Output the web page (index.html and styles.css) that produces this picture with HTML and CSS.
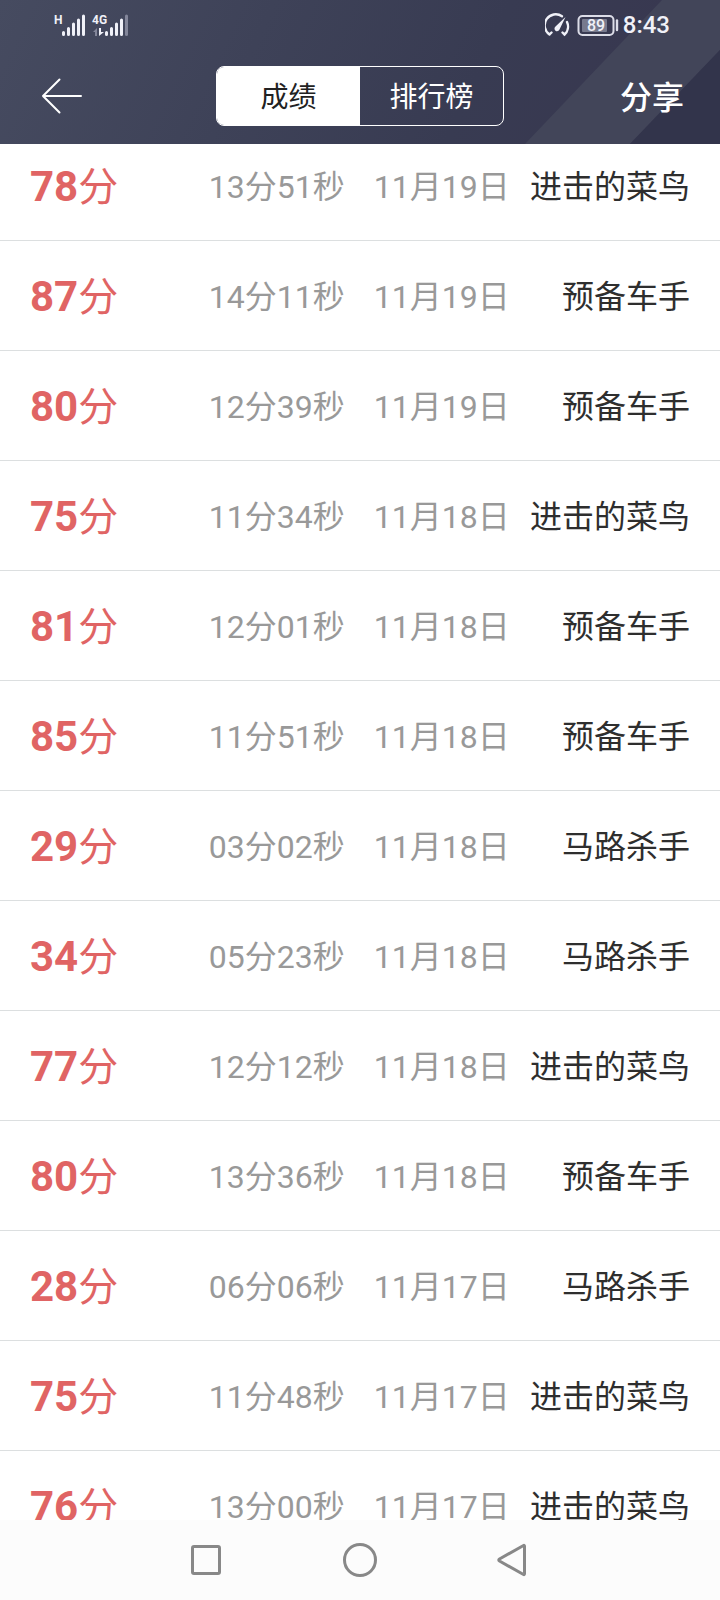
FILE: index.html
```
<!DOCTYPE html>
<html lang="zh-CN">
<head>
<meta charset="utf-8">
<meta name="viewport" content="width=device-width, initial-scale=1">
<title>成绩</title>
<link rel="stylesheet" href="styles.css">
</head>
<body>
<div class="app">
  <header class="header">
    <svg class="header-art" viewBox="0 0 720 144" preserveAspectRatio="xMaxYMid slice" aria-hidden="true">
      <path d="M662 0H720V50L630 144H525Z" fill="#424559"/>
      <path d="M720 50V144H630Z" fill="#32344b"/>
    </svg>
    <div class="status">
      <div class="status-group">
        <svg width="76" height="24" viewBox="53 12 76 24" aria-hidden="true">
          <g class="signal-label"><text x="54" y="23">H</text><text x="92" y="23">4G</text></g>
          <g stroke="#f0f1f8" stroke-width="3" stroke-linecap="round">
            <path d="M63.5 31.5V33.5M68.5 27.5V33.5M73.5 23V33.5M78.5 19V33.5M83.5 15V33.5"/>
            <path d="M106.5 31.5V33.5M111.5 27.5V33.5M116.5 23V33.5M121.5 19V33.5"/>
            <path d="M126.5 15V33.5" stroke="#83869a"/>
          </g>
          <path d="M93 31L97 27V35H95V31Z" fill="#83869a"/>
          <path d="M99 27H101V31H104L99 35Z" fill="#f0f1f8"/>
        </svg>
      </div>
      <div class="status-group">
        <svg width="74" height="24" viewBox="545 12 74 24" aria-hidden="true">
          <path d="M549.5 33.5L551.5 31.5M549.5 33.5A10.8 10.8 0 0 1 562 15.2M567 21A10.800 10.800 0 0 1 564.5 33.5L562.5 31.5" fill="none" stroke="#f0f1f8" stroke-width="2.4" stroke-linecap="round"/>
          <path d="M565.5 16L559.5 28.500A2.600 2.600 0 1 1 555.500 25.500Z" fill="#f0f1f8"/>
          <rect x="578.5" y="15" width="35" height="19" rx="4" fill="none" stroke="#dcdde8" stroke-width="2"/>
          <rect x="582" y="18" width="25" height="13" rx="1" fill="#777a8e"/>
          <path d="M617 19.5V29" stroke="#dcdde8" stroke-width="2.4" stroke-linecap="round"/>
          <text class="battery-label" x="596" y="30" text-anchor="middle">89</text>
        </svg>
        <time class="clock">8:43</time>
      </div>
    </div>
    <nav class="bar">
      <button class="back" type="button" aria-label="返回">
        <svg width="48" height="36" viewBox="0 0 48 36" aria-hidden="true">
          <path d="M23.500 1.500L7 18L23.500 34.500M7 18H45" fill="none" stroke="#fff" stroke-width="2" stroke-linecap="round" stroke-linejoin="round"/>
        </svg>
      </button>
      <div class="tabs">
        <button class="tab tab-active" type="button" aria-pressed="true">成绩</button>
        <button class="tab" type="button" aria-pressed="false">排行榜</button>
      </div>
      <button class="share" type="button">分享</button>
    </nav>
  </header>
  <main class="list">
    <table class="scores">
      <tbody>
        <tr><td class="score"><b>78</b>分</td><td class="time">13分51秒</td><td class="date">11月19日</td><td class="rank">进击的菜鸟</td></tr>
        <tr><td class="score"><b>87</b>分</td><td class="time">14分11秒</td><td class="date">11月19日</td><td class="rank">预备车手</td></tr>
        <tr><td class="score"><b>80</b>分</td><td class="time">12分39秒</td><td class="date">11月19日</td><td class="rank">预备车手</td></tr>
        <tr><td class="score"><b>75</b>分</td><td class="time">11分34秒</td><td class="date">11月18日</td><td class="rank">进击的菜鸟</td></tr>
        <tr><td class="score"><b>81</b>分</td><td class="time">12分01秒</td><td class="date">11月18日</td><td class="rank">预备车手</td></tr>
        <tr><td class="score"><b>85</b>分</td><td class="time">11分51秒</td><td class="date">11月18日</td><td class="rank">预备车手</td></tr>
        <tr><td class="score"><b>29</b>分</td><td class="time">03分02秒</td><td class="date">11月18日</td><td class="rank">马路杀手</td></tr>
        <tr><td class="score"><b>34</b>分</td><td class="time">05分23秒</td><td class="date">11月18日</td><td class="rank">马路杀手</td></tr>
        <tr><td class="score"><b>77</b>分</td><td class="time">12分12秒</td><td class="date">11月18日</td><td class="rank">进击的菜鸟</td></tr>
        <tr><td class="score"><b>80</b>分</td><td class="time">13分36秒</td><td class="date">11月18日</td><td class="rank">预备车手</td></tr>
        <tr><td class="score"><b>28</b>分</td><td class="time">06分06秒</td><td class="date">11月17日</td><td class="rank">马路杀手</td></tr>
        <tr><td class="score"><b>75</b>分</td><td class="time">11分48秒</td><td class="date">11月17日</td><td class="rank">进击的菜鸟</td></tr>
        <tr><td class="score"><b>76</b>分</td><td class="time">13分00秒</td><td class="date">11月17日</td><td class="rank">进击的菜鸟</td></tr>
      </tbody>
    </table>
  </main>
  <nav class="system-nav">
    <button class="nav-button" type="button" aria-label="最近任务">
      <svg width="36" height="36" viewBox="0 0 36 36" aria-hidden="true"><rect x="4.5" y="4.5" width="27" height="27" rx="1.5"/></svg>
    </button>
    <button class="nav-button" type="button" aria-label="主屏幕">
      <svg width="36" height="36" viewBox="0 0 36 36" aria-hidden="true"><circle cx="18" cy="18" r="15.5"/></svg>
    </button>
    <button class="nav-button" type="button" aria-label="返回上一级">
      <svg width="36" height="36" viewBox="0 0 36 36" aria-hidden="true"><path d="M27.500 3.500Q28.500 3 28.500 4.500V31.500Q28.500 33 27.500 32.500L3.500 19Q2 18 3.500 17Z"/></svg>
    </button>
  </nav>
</div>
</body>
</html>
```
FILE: styles.css
```
* {
  box-sizing: border-box;
}

body {
  margin: 0;
  background: #fff;
  font-family: Roboto, "Noto Sans CJK SC", sans-serif;
}

button {
  margin: 0;
  padding: 0;
  border: 0;
  background: none;
  color: inherit;
  font: inherit;
}

svg {
  display: block;
}

.app {
  display: flex;
  flex-direction: column;
  height: 100vh;
}

.header {
  position: relative;
  flex: none;
  color: #fff;
  background: linear-gradient(115deg, #464b60 0%, #3e4258 35%, #383b52 65%, #38364f 100%);
}

.header-art {
  position: absolute;
  inset: 0;
  width: 100%;
  height: 100%;
}

.status {
  position: relative;
  display: flex;
  align-items: center;
  justify-content: space-between;
  height: 48px;
  padding: 0 50px 0 53px;
}

.status-group {
  display: flex;
  align-items: center;
  gap: 4px;
  padding-top: 1px;
}

.signal-label {
  fill: #f0f1f8;
  font-family: "Liberation Sans Narrow", Roboto, sans-serif;
  font-size: 12px;
  font-weight: 700;
}

.battery-label {
  fill: #f0f1f8;
  font-size: 16px;
  font-weight: 500;
}

.clock {
  color: #f0f1f8;
  font-size: 24px;
  font-weight: 500;
  line-height: 24px;
}

.bar {
  position: relative;
  display: grid;
  grid-template-columns: 1fr 288px 1fr;
  align-items: center;
  height: 96px;
  padding: 0 36px;
}

.back {
  justify-self: start;
}

.tabs {
  display: flex;
  height: 60px;
  overflow: hidden;
  border: 1px solid #fff;
  border-radius: 8px;
}

.tab {
  flex: 1;
  padding-top: 4px;
  font-size: 28px;
  line-height: 40px;
}

.tab-active {
  background: #fff;
  color: #222;
}

.share {
  justify-self: end;
  padding-top: 4px;
  font-size: 32px;
  font-weight: 500;
  line-height: 48px;
}

.list {
  flex: 1;
  min-height: 0;
  overflow: hidden;
}

/* The list is scrolled slightly past its first row's top edge. */
.scores {
  width: 100%;
  margin-top: -13px;
  border-collapse: separate;
  border-spacing: 0;
  table-layout: fixed;
}

.scores td {
  height: 110px;
  padding: 3px 0 0;
  border-bottom: 1px solid #dcdfe0;
  font-size: 32px;
  line-height: 48px;
  vertical-align: middle;
  white-space: nowrap;
}

.scores .score {
  width: 29%;
  padding-top: 4px;
  padding-left: 30px;
  color: #e06464;
  font-size: 40px;
}

.score b {
  font-size: 42px;
}

.scores .time {
  width: 165px;
  color: #999;
}

.scores .date {
  color: #999;
}

.scores .rank {
  width: 190px;
  padding-right: 30px;
  color: #2e2e2e;
  text-align: right;
}

.system-nav {
  display: flex;
  flex: none;
  align-items: center;
  justify-content: center;
  height: 80px;
  background: #fcfcfc;
}

.nav-button {
  display: flex;
  justify-content: center;
  width: 154px;
}

.nav-button svg {
  fill: none;
  stroke: #888;
  stroke-width: 3;
}
```
